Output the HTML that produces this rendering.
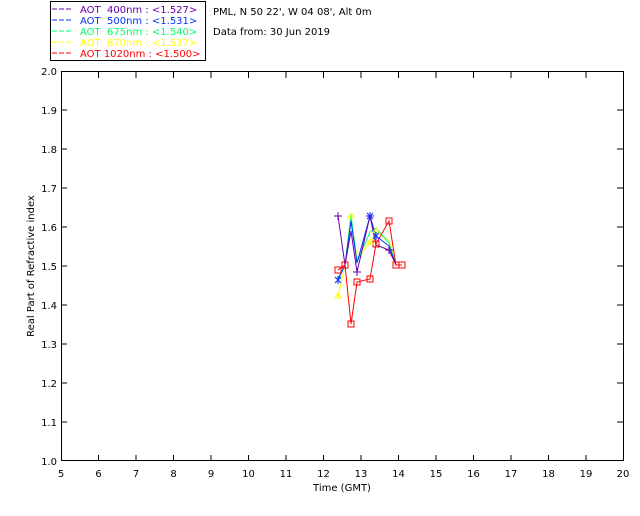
<!DOCTYPE html>
<html><head><style>
body{margin:0;background:#fff;width:640px;height:512px;overflow:hidden;font-family:"DejaVu Sans","Liberation Sans",sans-serif}
</style></head><body>
<svg width="640" height="512" xmlns="http://www.w3.org/2000/svg" font-family="DejaVu Sans, Liberation Sans, sans-serif" font-size="10">
<rect x="50.5" y="1.5" width="155" height="59" fill="none" stroke="#000"/>
<g font-size="10">
<line x1="52" y1="9" x2="73" y2="9" stroke="#6600aa" stroke-dasharray="5,2"/><text x="80" y="13" fill="#6600aa" xml:space="preserve">AOT  400nm : &lt;1.527&gt;</text>
<line x1="52" y1="20" x2="73" y2="20" stroke="#0033ff" stroke-dasharray="5,2"/><text x="80" y="24" fill="#0033ff" xml:space="preserve">AOT  500nm : &lt;1.531&gt;</text>
<line x1="52" y1="31" x2="73" y2="31" stroke="#00ff66" stroke-dasharray="5,2"/><text x="80" y="35" fill="#00ff66" xml:space="preserve">AOT  675nm : &lt;1.540&gt;</text>
<line x1="52" y1="42" x2="73" y2="42" stroke="#ffff00" stroke-dasharray="5,2"/><text x="80" y="46" fill="#ffff00" xml:space="preserve">AOT  870nm : &lt;1.537&gt;</text>
<line x1="52" y1="53" x2="73" y2="53" stroke="#ff0000" stroke-dasharray="5,2"/><text x="80" y="57" fill="#ff0000" xml:space="preserve">AOT 1020nm : &lt;1.500&gt;</text>
</g>
<text x="213" y="15">PML, N 50 22', W 04 08', Alt 0m</text>
<text x="213" y="35">Data from: 30 Jun 2019</text>
<rect x="61.5" y="71.5" width="562" height="389" fill="none" stroke="#000"/>
<g stroke="#000">
<path d="M98.5 461v-6M136 461v-6M173.5 461v-6M211 461v-6M248.5 461v-6M286 461v-6M323.5 461v-6M361 461v-6M398.5 461v-6M436 461v-6M473.5 461v-6M511 461v-6M548.5 461v-6M586 461v-6
M98.5 72v6M136 72v6M173.5 72v6M211 72v6M248.5 72v6M286 72v6M323.5 72v6M361 72v6M398.5 72v6M436 72v6M473.5 72v6M511 72v6M548.5 72v6M586 72v6
M61 422h6M61 383h6M61 344h6M61 305h6M61 266h6M61 227h6M61 188h6M61 149h6M61 110h6
M623 422h-6M623 383h-6M623 344h-6M623 305h-6M623 266h-6M623 227h-6M623 188h-6M623 149h-6M623 110h-6"/>
</g>
<g font-size="10" text-anchor="end">
<text x="57" y="465">1.0</text><text x="57" y="426">1.1</text><text x="57" y="387">1.2</text><text x="57" y="348">1.3</text><text x="57" y="309">1.4</text><text x="57" y="270">1.5</text><text x="57" y="231">1.6</text><text x="57" y="192">1.7</text><text x="57" y="153">1.8</text><text x="57" y="114">1.9</text><text x="57" y="75">2.0</text>
</g>
<g font-size="10" text-anchor="middle">
<text x="61" y="477">5</text><text x="98.5" y="477">6</text><text x="136" y="477">7</text><text x="173.5" y="477">8</text><text x="211" y="477">9</text><text x="248.5" y="477">10</text><text x="286" y="477">11</text><text x="323.5" y="477">12</text><text x="361" y="477">13</text><text x="398.5" y="477">14</text><text x="436" y="477">15</text><text x="473.5" y="477">16</text><text x="511" y="477">17</text><text x="548.5" y="477">18</text><text x="586" y="477">19</text><text x="623" y="477">20</text>
<text x="342" y="491">Time (GMT)</text>
<text transform="translate(34,266) rotate(-90)">Real Part of Refractive index</text>
</g>
<g fill="none">
<polyline points="338,297 345,265 351,217 357,258 370,243 376,232 389,240 396,265 402,265" stroke="#ffff00"/>
<polyline points="338,278 345,265 351,215 357,262 370,232 376,228 389,243 396,265 402,265" stroke="#00ff66"/>
<polyline points="338,280 345,265 351,221 357,263 370,216 376,236 389,246 396,265 402,265" stroke="#0033ff"/>
<polyline points="338,216 345,265 351,231 357,272 370,216 376,245 389,250 396,265 402,265" stroke="#6600aa"/>
<polyline points="338,270 345,265 351,324 357,282 370,279 376,244 389,221 396,265 402,265" stroke="#ff0000"/>
<g stroke="#ff0000">
<rect x="335" y="267" width="6" height="6"/><rect x="342" y="262" width="6" height="6"/><rect x="348" y="321" width="6" height="6"/><rect x="354" y="279" width="6" height="6"/><rect x="367" y="276" width="6" height="6"/><rect x="373" y="241" width="6" height="6"/><rect x="386" y="218" width="6" height="6"/><rect x="393" y="262" width="6" height="6"/><rect x="399" y="262" width="6" height="6"/>
</g>
<g stroke="#ffff00"><path d="M338 293l-3 5h6zM370 239l-3 5h6zM376 228l-3 5h6zM351 213l-3 5h6z"/></g>
<g stroke="#6600aa"><path d="M334 216h8M338 212v8M366 216h8M370 212v8M385 250h8M389 246v8M353 272h8M357 268v8"/></g>
<g stroke="#0033ff"><path d="M335 277l6 6M341 277l-6 6M338 276v8M367 213l6 6M373 213l-6 6M370 212v8M373 233l6 6M379 233l-6 6M376 232v8"/></g>
</g>
</svg>
</body></html>
